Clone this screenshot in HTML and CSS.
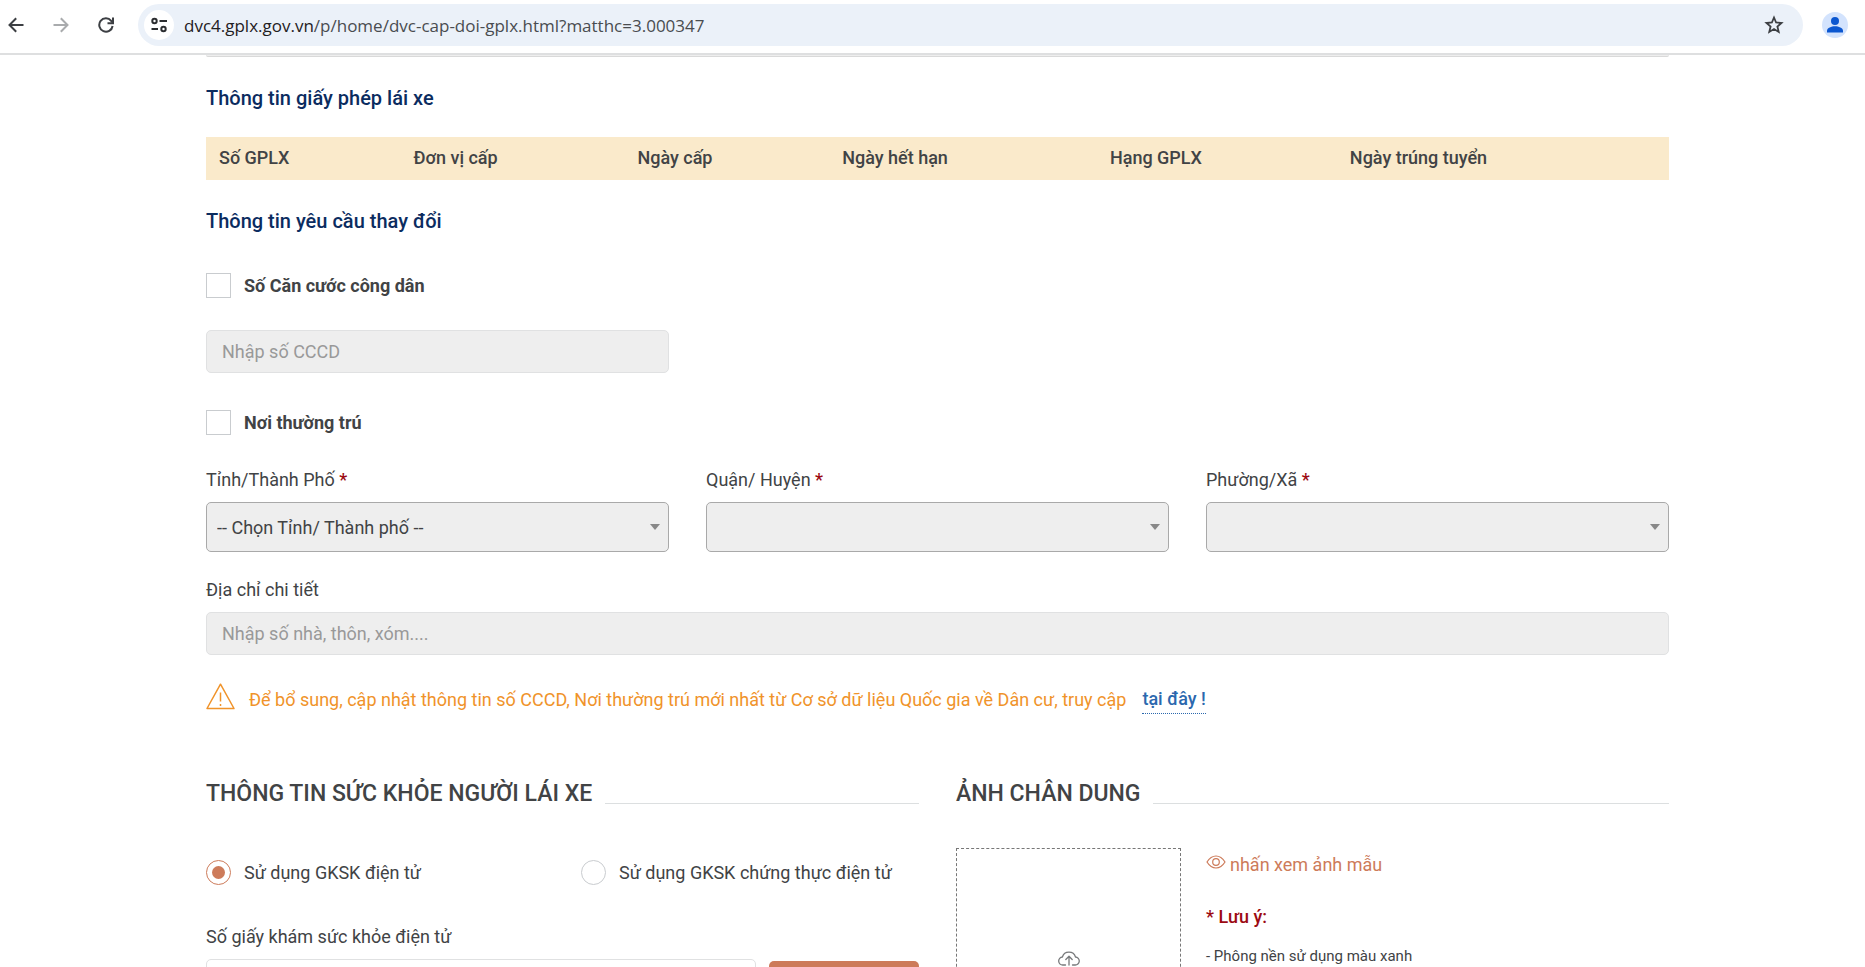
FILE: index.html
```html
<!DOCTYPE html>
<html lang="vi">
<head>
<meta charset="utf-8">
<meta name="viewport" content="width=device-width, initial-scale=1">
<title>Cấp đổi giấy phép lái xe</title>
<link rel="stylesheet" href="styles.css">
</head>
<body>
<div class="window">
  <header class="toolbar">
    <nav class="toolbar-nav" aria-label="Trình duyệt">
      <button class="icon-button" type="button" aria-label="Back">
        <svg width="16" height="16" viewBox="0 0 16 16" fill="none" stroke="#3c3f43" stroke-width="2"><path d="M15.500 8H1.500M8.200 1.200 1.500 8l6.700 6.800"/></svg>
      </button>
      <button class="icon-button" type="button" aria-label="Forward">
        <svg width="16" height="16" viewBox="0 0 16 16" fill="none" stroke="#a9abad" stroke-width="2"><path d="M.5 8h14M7.800 1.200 14.500 8l-6.700 6.800"/></svg>
      </button>
      <button class="icon-button" type="button" aria-label="Reload">
        <svg width="16" height="16" viewBox="0 0 16 16" fill="none" stroke="#3c3f43" stroke-width="2"><path d="M14.600 9A6.700 6.700 0 1 1 13.200 3.800L14.500 5.500"/><path d="M15 .5v5.700H9.500"/></svg>
      </button>
    </nav>
    <div class="address-bar">
      <button class="site-info" type="button" aria-label="Site information">
        <svg width="18" height="18" viewBox="0 0 18 18" fill="none" stroke="#2b2d30" stroke-width="2"><circle cx="4.500" cy="5" r="2.200"/><path d="M9.500 5H17M1.500 13H8"/><circle cx="13.500" cy="13" r="2.200"/></svg>
      </button>
      <p class="url"><span class="url-host">dvc4.gplx.gov.vn</span>/p/home/dvc-cap-doi-gplx.html?matthc=3.000347</p>
      <button class="icon-button" type="button" aria-label="Bookmark">
        <svg width="20" height="20" viewBox="0 0 20 20" fill="none" stroke="#3c3f43" stroke-width="1.800"><path d="M10 2.500 12.100 7.500l5.400.5-4.100 3.500 1.300 5.400L10 14.100l-4.700 2.800 1.300-5.400L2.500 8l5.400-.5z"/></svg>
      </button>
    </div>
    <button class="profile" type="button" aria-label="Profile">
      <svg width="26" height="26" viewBox="0 0 26 26"><circle cx="13" cy="13" r="13" fill="#d3e3fd"/><circle cx="13" cy="9" r="4" fill="#0b57d0"/><path d="M5 20.500v-1.700c0-3 4.500-4.500 8-4.500s8 1.500 8 4.500v1.700z" fill="#0b57d0"/></svg>
    </button>
  </header>

  <main class="page">
    <form class="content">
      <div class="previous-card"></div>

      <h2 class="subtitle">Thông tin giấy phép lái xe</h2>
      <table class="license-table">
        <thead>
          <tr>
            <th class="col-number" scope="col">Số GPLX</th>
            <th class="col-unit" scope="col">Đơn vị cấp</th>
            <th class="col-issued" scope="col">Ngày cấp</th>
            <th class="col-expiry" scope="col">Ngày hết hạn</th>
            <th class="col-class" scope="col">Hạng GPLX</th>
            <th class="col-passed" scope="col">Ngày trúng tuyển</th>
          </tr>
        </thead>
      </table>

      <h2 class="subtitle subtitle-change">Thông tin yêu cầu thay đổi</h2>
      <div class="choice choice-id">
        <input class="check" type="checkbox" id="change-id">
        <label class="choice-label strong" for="change-id">Số Căn cước công dân</label>
      </div>
      <div class="three-columns id-row">
        <input class="text-input" type="text" placeholder="Nhập số CCCD" aria-label="Số Căn cước công dân" disabled>
      </div>

      <div class="choice choice-residence">
        <input class="check" type="checkbox" id="change-residence">
        <label class="choice-label strong" for="change-residence">Nơi thường trú</label>
      </div>
      <div class="three-columns residence-row">
        <div class="field">
          <label class="field-label" for="province">Tỉnh/Thành Phố <span class="required">*</span></label>
          <div class="select-box"><select class="select" id="province"><option>-- Chọn Tỉnh/ Thành phố --</option></select></div>
        </div>
        <div class="field">
          <label class="field-label" for="district">Quận/ Huyện <span class="required">*</span></label>
          <div class="select-box"><select class="select" id="district"></select></div>
        </div>
        <div class="field">
          <label class="field-label" for="ward">Phường/Xã <span class="required">*</span></label>
          <div class="select-box"><select class="select" id="ward"></select></div>
        </div>
      </div>
      <div class="field address-field">
        <label class="field-label" for="address">Địa chỉ chi tiết</label>
        <input class="text-input" type="text" id="address" placeholder="Nhập số nhà, thôn, xóm...." disabled>
      </div>

      <p class="notice">
        <svg class="notice-icon" width="29" height="27" viewBox="0 0 29 27" fill="none" stroke="#f0932a" stroke-width="1.500" stroke-linejoin="round"><path d="M14.500 1.200 28 25.500H1z"/><path d="M14.500 9.500v9M14.500 21v2"/></svg>
        <span>Để bổ sung, cập nhật thông tin số CCCD, Nơi thường trú mới nhất từ Cơ sở dữ liệu Quốc gia về Dân cư, truy cập</span>
        <a class="notice-link" href="#">tại đây !</a>
      </p>

      <div class="sections">
        <section class="section">
          <h1 class="section-title">THÔNG TIN SỨC KHỎE NGƯỜI LÁI XE</h1>
          <div class="health-options">
            <div class="choice">
              <input class="radio" type="radio" name="health" id="health-digital" checked>
              <label class="choice-label" for="health-digital">Sử dụng GKSK điện tử</label>
            </div>
            <div class="choice">
              <input class="radio" type="radio" name="health" id="health-certified">
              <label class="choice-label" for="health-certified">Sử dụng GKSK chứng thực điện tử</label>
            </div>
          </div>
          <label class="field-label" for="health-number">Số giấy khám sức khỏe điện tử</label>
          <div class="health-row">
            <input class="text-input text-input-open" type="text" id="health-number">
            <button class="lookup" type="button" aria-label="Tra cứu"></button>
          </div>
        </section>

        <section class="section">
          <h1 class="section-title">ẢNH CHÂN DUNG</h1>
          <div class="portrait">
            <button class="upload" type="button" aria-label="Tải ảnh lên">
              <svg width="22" height="18" viewBox="0 0 22 18" fill="none" stroke="#77797b" stroke-width="1.300" stroke-linecap="round" stroke-linejoin="round"><path d="M7.500 15H5A4 4 0 0 1 4.400 7 6.800 6.800 0 0 1 17.500 7 4 4 0 0 1 17 15h-2.500"/><path d="M11 15V6.500M7.800 9.500 11 6.300l3.200 3.200"/></svg>
            </button>
            <div class="portrait-notes">
              <a class="sample-link" href="#">
                <svg width="20" height="14" viewBox="0 0 20 14" fill="none" stroke="#cd7b5a" stroke-width="1.200"><path d="M1 7c2.500-4 5.700-6 9-6s6.500 2 9 6c-2.500 4-5.700 6-9 6S3.500 11 1 7z"/><circle cx="10" cy="7" r="3.300"/></svg>
                <span>nhấn xem ảnh mẫu</span>
              </a>
              <p class="note-title">* Lưu ý:</p>
              <p class="note-item">- Phông nền sử dụng màu xanh</p>
            </div>
          </div>
        </section>
      </div>
    </form>
  </main>
</div>
</body>
</html>
```

FILE: styles.css
```css
*,
*::before,
*::after {
  box-sizing: border-box;
}

body {
  margin: 0;
  background: #fff;
  color: #414345;
  font: 18px/24px Roboto, sans-serif;
}

h1, h2, p {
  margin: 0;
}

button, input, select {
  margin: 0;
  color: inherit;
  font: inherit;
}

.window {
  display: flex;
  flex-direction: column;
  height: 100vh;
  overflow: hidden;
}

/* Browser toolbar */
.toolbar {
  flex: none;
  display: flex;
  align-items: center;
  padding: 4px 17px 7px 8px;
  border-bottom: 2px solid #dedfe0;
}

.toolbar-nav {
  display: flex;
  gap: 29px;
  margin-right: 24px;
}

.icon-button, .profile, .site-info {
  display: flex;
  align-items: center;
  justify-content: center;
  padding: 0;
  border: 0;
  background: none;
}

.address-bar {
  flex: 1;
  display: flex;
  align-items: center;
  height: 42px;
  padding: 0 19px 0 6px;
  border-radius: 21px;
  background: #ebf1f9;
}

.site-info {
  width: 30px;
  height: 30px;
  border-radius: 50%;
  background: #fff;
}

.url {
  flex: 1;
  padding: 2px 0 0 10px;
  color: #494c50;
  font: 17px/24px "Open Sans", sans-serif;
}

.url-host {
  color: #1f2023;
}

.profile {
  margin-left: 19px;
}

/* Page */
.page {
  flex: 1;
  min-height: 0;
  overflow: hidden;
  padding: 0 196px 0 206px;
}

.previous-card {
  height: 2px;
  border-bottom: 1px solid #d9d9d9;
  border-radius: 0 0 5px 5px;
  background: #eee;
}

.subtitle {
  margin-top: 29px;
  color: #0b2c5f;
  font-size: 20px;
  font-weight: 500;
}

.license-table {
  width: 100%;
  margin-top: 27px;
  border-collapse: collapse;
  table-layout: fixed;
  background: #faeacb;
}

.license-table th {
  height: 43px;
  padding: 0 0 2px 13px;
  font-weight: 500;
  text-align: left;
}

.col-number { width: 13.3%; }
.col-unit { width: 15.3%; }
.col-issued { width: 14%; }
.col-expiry { width: 18.3%; }
.col-class { width: 16.4%; }

.choice {
  display: flex;
  align-items: center;
  gap: 13px;
  height: 25px;
}

.choice-id {
  margin-top: 40px;
}

.choice-residence {
  margin-top: 37px;
}

.strong {
  font-weight: 700;
}

.check, .radio {
  appearance: none;
  flex: none;
  width: 25px;
  height: 25px;
  border: 1px solid #c9cccf;
  background: #fff;
}

.radio {
  display: grid;
  place-items: center;
  border-radius: 50%;
}

.radio:checked {
  border-color: #cd7b5a;
}

.radio:checked::before {
  content: "";
  width: 13px;
  height: 13px;
  border-radius: 50%;
  background: #cd7b5a;
}

.three-columns {
  display: grid;
  grid-template-columns: repeat(3, 1fr);
  gap: 37px;
}

.id-row {
  margin-top: 32px;
}

.residence-row {
  margin-top: 33px;
}

.field-label {
  display: block;
  margin-bottom: 10px;
}

.required {
  color: #9c0a12;
  font-weight: 500;
}

.text-input {
  display: block;
  width: 100%;
  height: 43px;
  padding: 0 15px;
  border: 1px solid #e0e1e2;
  border-radius: 5px;
  background: #eee;
}

.text-input::placeholder {
  color: #999;
  opacity: 1;
}

.text-input-open {
  background: #fff;
}

.select-box {
  position: relative;
}

.select-box::after {
  content: "";
  position: absolute;
  top: 22px;
  right: 9px;
  border: 5px solid transparent;
  border-top: 6px solid #888;
  border-bottom: 0;
  pointer-events: none;
}

.select {
  appearance: none;
  display: block;
  width: 100%;
  height: 50px;
  padding: 2px 10px 0;
  border: 1px solid #a9a9a9;
  border-radius: 5px;
  background: #eee;
}

.address-field {
  margin-top: 26px;
}

.notice {
  display: flex;
  margin-top: 28px;
  color: #f0932a;
  line-height: 34px;
}

.notice-icon {
  flex: none;
  margin-right: 14px;
}

.notice-link {
  align-self: flex-start;
  margin-left: 16px;
  padding-top: 2px;
  border-bottom: 1px dotted #2b68ae;
  color: #2b68ae;
  font-weight: 500;
  line-height: 28px;
  text-decoration: none;
}

/* Health certificate and portrait */
.sections {
  display: grid;
  grid-template-columns: 1fr 1fr;
  gap: 37px;
  margin-top: 62px;
}

.section-title {
  display: flex;
  align-items: flex-end;
  gap: 13px;
  font-size: 23px;
  font-weight: 500;
  line-height: 30px;
}

.section-title::after {
  content: "";
  flex: 1;
  margin-bottom: 5px;
  border-bottom: 1px solid #dcdfe0;
}

.health-options {
  display: grid;
  grid-template-columns: 1fr 1fr;
  gap: 37px;
  margin: 51px 0 40px;
}

.choice-label {
  white-space: nowrap;
}

.health-row {
  display: flex;
  gap: 13px;
}

.lookup {
  flex: none;
  width: 150px;
  height: 43px;
  margin-top: 2px;
  border: 0;
  border-radius: 5px;
  background: #cd7b5a;
}

.portrait {
  display: flex;
  gap: 25px;
  margin-top: 39px;
}

.upload {
  flex: none;
  display: flex;
  justify-content: center;
  width: 225px;
  height: 300px;
  padding: 101px 0 0;
  border: 1px dashed #777;
  background: #fff;
}

.portrait-notes {
  padding-top: 5px;
}

.sample-link {
  display: flex;
  gap: 4px;
  color: #cd7b5a;
  text-decoration: none;
}

.sample-link svg {
  margin-top: 2px;
}

.note-title {
  margin-top: 28px;
  color: #9c0a12;
  font-weight: 500;
}

.note-item {
  margin-top: 15px;
  font-size: 15px;
}
```
